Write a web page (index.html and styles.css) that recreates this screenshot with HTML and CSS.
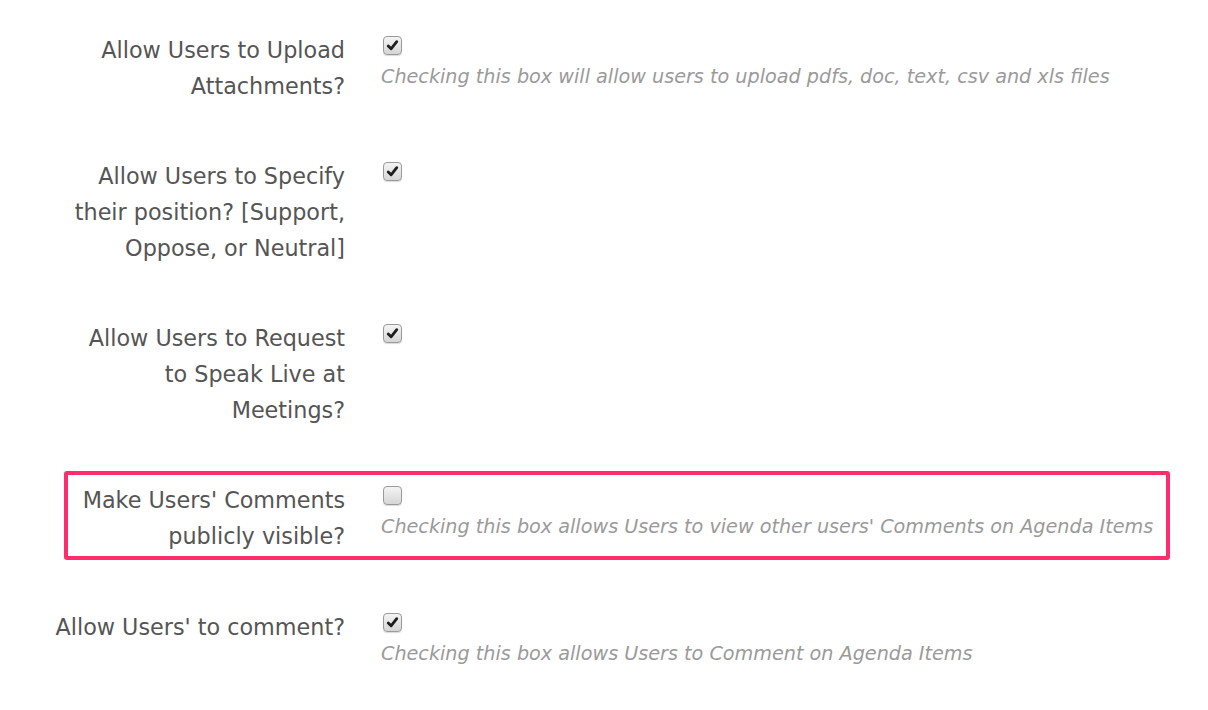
FILE: index.html
```html
<!DOCTYPE html>
<html>
<head>
    <meta charset="utf-8">
    <title>Comment Settings</title>
    <link rel="stylesheet" href="styles.css">
</head>
<body>
    <div class="settings">
        <div class="row">
            <label class="label">Allow Users to Upload<br>Attachments?</label>
            <div class="control">
                <span class="check checked"><svg viewBox="0 0 18 18"><path d="M4.5 9.5 L7.5 12.5 L13.5 5" /></svg></span>
                <p class="help">Checking this box will allow users to upload pdfs, doc, text, csv and xls files</p>
            </div>
        </div>

        <div class="row">
            <label class="label">Allow Users to Specify<br>their position? [Support,<br>Oppose, or Neutral]</label>
            <div class="control">
                <span class="check checked"><svg viewBox="0 0 18 18"><path d="M4.5 9.5 L7.5 12.5 L13.5 5" /></svg></span>
            </div>
        </div>

        <div class="row">
            <label class="label">Allow Users to Request<br>to Speak Live at<br>Meetings?</label>
            <div class="control">
                <span class="check checked"><svg viewBox="0 0 18 18"><path d="M4.5 9.5 L7.5 12.5 L13.5 5" /></svg></span>
            </div>
        </div>

        <div class="row highlight">
            <label class="label">Make Users' Comments<br>publicly visible?</label>
            <div class="control">
                <span class="check"></span>
                <p class="help">Checking this box allows Users to view other users' Comments on Agenda Items</p>
            </div>
        </div>

        <div class="row">
            <label class="label">Allow Users' to comment?</label>
            <div class="control">
                <span class="check checked"><svg viewBox="0 0 18 18"><path d="M4.5 9.5 L7.5 12.5 L13.5 5" /></svg></span>
                <p class="help">Checking this box allows Users to Comment on Agenda Items</p>
            </div>
        </div>
    </div>
</body>
</html>
```

FILE: styles.css
```css
html {
    height: 100%;
}

body {
    margin: 0;
    background: white;
    font-family: "DejaVu Sans", Verdana, sans-serif;
}

.settings {
    padding: 32px 0 0 0;
}

.row {
    display: flex;
    gap: 36px;
    margin-bottom: 54px;
}

.label {
    width: 300px;
    margin-left: 45px;
    text-align: right;
    font-size: 22.3px;
    line-height: 36px;
    color: #555;
}

.control {
    flex: 1;
    padding-top: 4px;
}

.check {
    display: block;
    width: 17px;
    height: 17px;
    margin-left: 2px;
    border: 1px solid #9a9a9a;
    border-radius: 4px;
    background: linear-gradient(#f4f4f4, #d6d6d6);
    box-shadow: 0 1px 1px rgba(0, 0, 0, 0.15);
}

.check svg {
    width: 17px;
    height: 17px;
    display: block;
}

.check path {
    fill: none;
    stroke: #1e1e1e;
    stroke-width: 3;
    stroke-linecap: round;
    stroke-linejoin: round;
}

.help {
    margin: 5px 0 0 0;
    font-size: 19.2px;
    font-style: italic;
    line-height: 34px;
    color: #9a9a9a;
}

.highlight {
    margin: -11px 38px 49px 64px;
    padding: 7px 0 2px 0;
    border: 4px solid #ff2d6b;
    border-radius: 3px;
}

.highlight .label {
    margin-left: -23px;
}
```
